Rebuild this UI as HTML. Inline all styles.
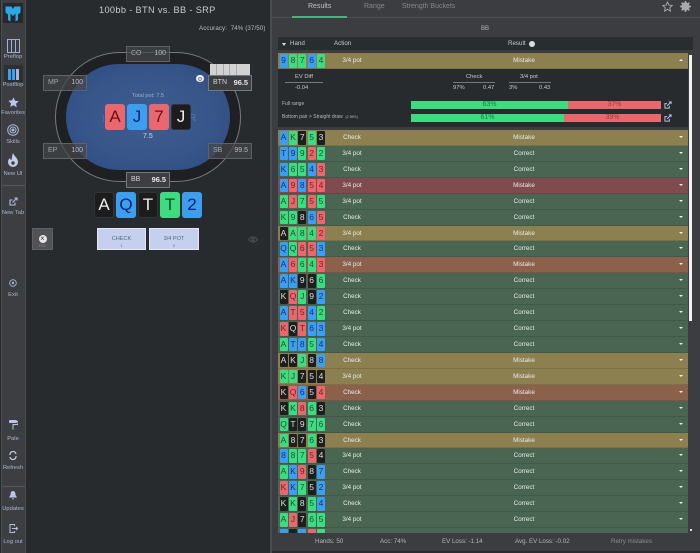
<!DOCTYPE html>
<html><head><meta charset="utf-8"><style>
html,body{margin:0;padding:0;background:#272b2e}
#p{position:relative;width:700px;height:553px;overflow:hidden;background:#272b2e;font-family:"Liberation Sans",sans-serif;color:#c9ccd2;filter:blur(.3px)}
.a{position:absolute}
#side{left:1px;top:0;width:25px;height:553px;background:#3c3e42;border-left:1px solid #4a4c50;border-right:1px solid #4a4c50;box-sizing:border-box}
.sl{position:absolute;left:0;width:26px;text-align:center;font-size:5.8px;color:#a9b4d2;line-height:7px;white-space:nowrap}
#right{left:270px;top:0;width:430px;height:553px;background:#3c3d40;border-left:2px solid #4b4c50;box-sizing:border-box}
.seat{position:absolute;width:44px;height:16px;background:rgba(70,72,75,.7);border:1px solid #5f6164;box-sizing:border-box;font-size:7px;line-height:14px;color:#a4a6a9}
.seat b{position:absolute;right:3px;font-weight:normal;font-size:7px;color:#b8babd}
.seat span{position:absolute;left:4px}
.seat.on{background:#3c3e41;border:1px solid #77797c}
.seat.on b{color:#e6e6e6;font-weight:bold;font-size:7.4px}.seat.on span{color:#d0d2d4}
.c{position:absolute;width:20px;height:26px;border-radius:3px;text-align:center;font-size:17px;line-height:26px}
.c.rr{background:#e8686e;color:#6b0f16}.c.bb{background:#3b9eee;color:#0d1f6e}.c.gg{background:#3ddc80;color:#0b4a27}.c.kk{background:#1c1c1c;color:#eee;border:1px solid #333;box-sizing:border-box;line-height:24px}
.btn{position:absolute;top:228px;height:22px;background:#c5d0ee;border:1px solid #e4e8f4;box-sizing:border-box;text-align:center;font-size:5.6px;color:#5c6480;line-height:7px;padding-top:6.5px}
#list{left:278px;top:130px;width:410px;height:403px;overflow:hidden}
.r{position:relative;height:15.93px;box-sizing:border-box;border-bottom:1px solid rgba(0,0,0,.12);font-size:6.3px;color:#e8eae8;line-height:15px}
.Y{background:#8c8050}.G{background:#4a6653}.R{background:#7f4b4f}.O{background:#8c614c}
.r i{position:absolute;top:1px;width:8px;height:13.5px;border-radius:1px;text-align:center;font:normal 8.5px/13.5px "Liberation Sans",sans-serif}
.r i:nth-child(1){left:1.5px}.r i:nth-child(2){left:11px}.r i:nth-child(3){left:20.3px}.r i:nth-child(4){left:29.6px}.r i:nth-child(5){left:39px}
i.b{background:#3b9eee;color:#14307e}i.g{background:#3ddc80;color:#12582f}i.e{background:#e8686e;color:#7a1c22}i.k{background:#1e1e1e;color:#ddd}
.r u{position:absolute;left:59px;width:30px;text-align:center;text-decoration:none;white-space:nowrap}
.r s{position:absolute;left:221px;width:50px;text-align:center;text-decoration:none}
.r em{position:absolute;left:401px;top:6px;width:0;height:0;border:2px solid transparent;border-top:2.5px solid #eee;border-bottom:0}
.t{position:absolute;white-space:nowrap}
</style></head><body><div id="p">

<div class="a" id="side"></div>
<div class="a" style="left:3px;top:3px;width:20px;height:20px;background:#26282b;border-radius:1px"></div>
<svg class="a" style="left:3px;top:3px" width="20" height="20" viewBox="0 0 20 20"><path d="M2.500 3.500H8.500L10 6 11.500 3.500H17.500V9.500L15 11.500V17L12.500 18.500V10.500L10 13 7.500 10.500V18.500L5 17V11.500L2.500 9.500Z" fill="#2ba8e8"/></svg>
<svg class="a" style="left:7px;top:39px" width="13" height="14" viewBox="0 0 13 14"><rect x=".5" y=".5" width="12" height="13" fill="none" stroke="#9fb0d6"/><path d="M4.500 1V13M8.500 1V13" stroke="#9fb0d6"/></svg>
<div class="sl" style="top:54px">Preflop</div>
<div class="a" style="left:4px;top:65px;width:19px;height:17px;background:#2d2f33"></div>
<svg class="a" style="left:8px;top:69px" width="11" height="12" viewBox="0 0 11 12"><rect width="3" height="11" fill="#3a9fee"/><rect x="4" width="3" height="11" fill="#3a9fee"/><rect x="8" width="3" height="11" fill="#a8b4d0"/></svg>
<div class="sl" style="top:82px">Postflop</div>
<svg class="a" style="left:8px;top:97px" width="11" height="11" viewBox="0 0 24 24"><path d="M12 1l3.400 7.300 7.900 1-5.800 5.500 1.500 7.900L12 18l-7 3.700 1.500-7.900L.7 8.300l7.900-1z" fill="#b9c6ea"/></svg>
<div class="sl" style="top:110px">Favorites</div>
<svg class="a" style="left:7px;top:124px" width="12" height="12" viewBox="0 0 12 12" fill="none" stroke="#a9b6d6"><circle cx="6" cy="6" r="5.300"/><circle cx="6" cy="6" r="3"/><circle cx="6" cy="6" r="1" fill="#a9b6d6"/></svg>
<div class="sl" style="top:139px">Skills</div>
<svg class="a" style="left:7px;top:153px" width="12" height="14" viewBox="0 0 12 14"><path d="M6 0C7 3 11 5 11 9A5 5 0 0 1 1 9C1 7 2 6 3 5 3 6.500 4 7 4.500 7 5 4.500 5 2 6 0Z" fill="#c2cdea"/><circle cx="6" cy="10" r="1.700" fill="#3a3c40"/></svg>
<div class="sl" style="top:171px">New UI</div>
<div class="a" style="left:2px;top:185px;width:23px;height:1px;background:#565860"></div>
<svg class="a" style="left:9px;top:197px" width="9" height="9" viewBox="0 0 9 9" fill="none" stroke="#b4c0de" stroke-width="1.100"><path d="M6 5.500V8H1V3H3.500M3.500 5.500L8 1M5.500 1H8V3.500"/></svg>
<div class="sl" style="top:210px">New Tab</div>
<svg class="a" style="left:9px;top:279px" width="8" height="8" viewBox="0 0 8 8"><circle cx="4" cy="4" r="3.300" fill="none" stroke="#a9b6d6" stroke-width=".9"/><circle cx="4" cy="4" r="1.200" fill="#a9b6d6"/></svg>
<div class="sl" style="top:292px">Exit</div>
<svg class="a" style="left:9px;top:420px" width="9" height="10" viewBox="0 0 9 10"><rect width="8" height="3" rx="1" fill="#b9c6ea"/><path d="M8 1.500H9V4.500H4V9.500" fill="none" stroke="#b9c6ea"/></svg>
<div class="sl" style="top:436px">Pale</div>
<svg class="a" style="left:9px;top:451px" width="8" height="9" viewBox="0 0 8 9" fill="none" stroke="#c2cdea" stroke-width="1.200"><path d="M1 4A3 3 0 0 1 7 3M7 5A3 3 0 0 1 1 6"/></svg>
<div class="sl" style="top:465px">Refresh</div>
<div class="a" style="left:2px;top:486px;width:23px;height:1px;background:#565860"></div>
<svg class="a" style="left:9px;top:491px" width="8" height="9" viewBox="0 0 8 9"><path d="M4 0C6 0 6.500 2 6.500 4L8 6.500H0L1.500 4C1.500 2 2 0 4 0ZM3 7.300H5L4 9Z" fill="#b9c6ea"/></svg>
<div class="sl" style="top:506px">Updates</div>
<svg class="a" style="left:9px;top:524px" width="9" height="9" viewBox="0 0 9 9" fill="none" stroke="#b4c0de"><path d="M5.500 2V.5H1V8.500H5.500V7M3 4.500H8.500M7 3L8.500 4.500 7 6"/></svg>
<div class="sl" style="top:539px">Log out</div>

<div class="t" style="left:99px;top:5px;font-size:9.200px;letter-spacing:.35px;color:#c8cace;line-height:11px">100bb - BTN vs. BB - SRP</div>
<div class="t" style="left:199px;top:25px;font-size:6.200px;letter-spacing:.1px;color:#b8bbc0;line-height:8px">Accuracy: &nbsp;74% (37/50)</div>

<div class="a" style="left:55px;top:52px;width:186px;height:130px;border-radius:65px;box-sizing:border-box;border:1px solid #77797c;background:#1f2023"></div>
<div class="a" style="left:66px;top:64px;width:164px;height:106px;border-radius:53px;background:radial-gradient(ellipse at center,#3f5c8e 0%,#38568a 55%,#2a4a80 100%)"></div>
<div class="t" style="left:102px;top:114px;font-size:10px;color:#2f78b8">I</div>
<div class="t" style="left:189px;top:113px;font-size:10px;color:#5a7aa8">R</div>
<div class="t" style="left:132px;top:93px;font-size:5.600px;color:#9bb0c8">Total pot: 7.5</div>
<div class="c rr" style="left:105px;top:104px">A</div>
<div class="c bb" style="left:127px;top:104px">J</div>
<div class="c rr" style="left:149px;top:104px">7</div>
<div class="c kk" style="left:171px;top:104px">J</div>
<div class="t" style="left:143px;top:133px;font-size:7px;color:#d4dae6">7.5</div>

<div class="seat" style="left:126px;top:46px"><span>CO</span><b>100</b></div>
<div class="seat" style="left:43px;top:75px"><span>MP</span><b>100</b></div>
<div class="seat" style="left:43px;top:143px"><span>EP</span><b>100</b></div>
<div class="seat" style="left:208px;top:143px"><span>SB</span><b>99.5</b></div>
<div class="a" style="left:210px;top:64px;width:40px;height:12px;background:#d2d2d2"></div>
<div class="a" style="left:216px;top:64px;width:1px;height:12px;background:#aaa"></div>
<div class="a" style="left:223px;top:64px;width:1px;height:12px;background:#aaa"></div>
<div class="a" style="left:229px;top:64px;width:1px;height:12px;background:#aaa"></div>
<div class="a" style="left:236px;top:64px;width:1px;height:12px;background:#aaa"></div>
<div class="seat on" style="left:208px;top:75px"><span>BTN</span><b>96.5</b></div>
<div class="seat on" style="left:126px;top:172px"><span>BB</span><b>96.5</b></div>
<div class="a" style="left:196px;top:75px;width:8px;height:7px;border-radius:4px;background:#eee"></div>
<div class="a" style="left:198px;top:76.500px;width:4px;height:4px;border-radius:2px;border:1px solid #888;box-sizing:border-box"></div>

<div class="c kk" style="left:94px;top:192px">A</div>
<div class="c bb" style="left:116px;top:192px">Q</div>
<div class="c kk" style="left:138px;top:192px">T</div>
<div class="c gg" style="left:160px;top:192px">T</div>
<div class="c bb" style="left:182px;top:192px">2</div>

<div class="a" style="left:32px;top:228px;width:21px;height:22px;background:#505255;border:1px solid #5e6063;box-sizing:border-box"></div>
<div class="a" style="left:38.500px;top:235px;width:8px;height:8px;border-radius:4px;background:#e6e6e6;color:#444;font-size:8px;line-height:7.500px;text-align:center">×</div>
<div class="t" style="left:39px;top:243.500px;font-size:3.500px;color:#888">ESC</div>
<div class="btn" style="left:97px;width:49px">CHECK<br><span style="font-size:4px;line-height:5px">1</span></div>
<div class="btn" style="left:149px;width:50px">3/4 POT<br><span style="font-size:4px;line-height:5px">2</span></div>
<svg class="a" style="left:248px;top:236px" width="10" height="7" viewBox="0 0 10 7" fill="none" stroke="#4f5256"><path d="M.5 3.500C3 0 7 0 9.500 3.500 7 7 3 7 .5 3.500Z"/><circle cx="5" cy="3.500" r="1.300"/></svg>

<div class="a" id="right"></div>
<div class="a" style="left:272px;top:17px;width:428px;height:1px;background:#4e4f53"></div>
<div class="a" style="left:292px;top:16px;width:55px;height:2px;background:#3db87a"></div>
<div class="t" style="left:308px;top:3px;font-size:7px;color:#bfc1c4;line-height:8px">Results</div>
<div class="t" style="left:364px;top:3px;font-size:7px;color:#85878b;line-height:8px">Range</div>
<div class="t" style="left:402px;top:3px;font-size:7px;color:#85878b;line-height:8px">Strength Buckets</div>
<svg class="a" style="left:662px;top:1px" width="11" height="11" viewBox="0 0 24 24"><path d="M12 2l3 6.800 7.400.8-5.500 5 1.500 7.300L12 18.200 5.600 22l1.500-7.300-5.500-5L9 8.800z" fill="none" stroke="#a8aaae" stroke-width="2"/></svg>
<svg class="a" style="left:680px;top:1px" width="11" height="11" viewBox="0 0 11 11"><circle cx="5.500" cy="5.500" r="3" fill="none" stroke="#a8aaae" stroke-width="2.200"/><path d="M5.500 0V11M0 5.500H11M1.600 1.600L9.400 9.400M9.400 1.600L1.600 9.400" stroke="#a8aaae" stroke-width="1.500"/></svg>
<div class="t" style="left:481px;top:25px;font-size:6px;color:#b4b6ba;line-height:8px">BB</div>

<div class="a" style="left:278px;top:37px;width:415px;height:13px;background:#2a2d30"></div>
<div class="a" style="left:281.500px;top:42.500px;width:0;height:0;border:2.500px solid transparent;border-top:3px solid #ddd;border-bottom:0"></div>
<div class="t" style="left:290px;top:40px;font-size:6.200px;color:#c8cacc;line-height:8px">Hand</div>
<div class="t" style="left:334px;top:40px;font-size:6.200px;color:#c8cacc;line-height:8px">Action</div>
<div class="t" style="left:508px;top:40px;font-size:6.200px;color:#c8cacc;line-height:8px">Result</div>
<div class="a" style="left:529px;top:41px;width:6px;height:6px;border-radius:3px;background:#ddd"></div>

<div class="a" style="left:278px;top:53px;width:410px;height:74px;background:#272b2e"></div>
<div class="r Y a" style="left:278px;top:53px;width:410px;height:16px"><i class="b">9</i><i class="g">8</i><i class="g">7</i><i class="b">6</i><i class="g">4</i><u>3/4 pot</u><s>Mistake</s><em style="border-top:0;border-bottom:2.500px solid #eee"></em></div>

<div class="t" style="left:295px;top:74px;font-size:5.800px;color:#c8cacc;line-height:7px">EV Diff</div>
<div class="a" style="left:285px;top:82px;width:38px;height:1px;background:#777"></div>
<div class="t" style="left:295px;top:85px;font-size:5.800px;color:#c8cacc;line-height:7px">-0.04</div>
<div class="t" style="left:466px;top:74px;font-size:5.800px;color:#c8cacc;line-height:7px">Check</div>
<div class="a" style="left:453px;top:82px;width:42px;height:1px;background:#777"></div>
<div class="t" style="left:453px;top:85px;font-size:5.800px;color:#c8cacc;line-height:7px">97%</div>
<div class="t" style="left:483px;top:85px;font-size:5.800px;color:#c8cacc;line-height:7px">0.47</div>
<div class="t" style="left:520px;top:74px;font-size:5.800px;color:#c8cacc;line-height:7px">3/4 pot</div>
<div class="a" style="left:509px;top:82px;width:42px;height:1px;background:#777"></div>
<div class="t" style="left:509px;top:85px;font-size:5.800px;color:#c8cacc;line-height:7px">3%</div>
<div class="t" style="left:539px;top:85px;font-size:5.800px;color:#c8cacc;line-height:7px">0.43</div>

<div class="t" style="left:282px;top:101px;font-size:5px;color:#b8babc;line-height:7px">Full range</div>
<div class="a" style="left:411px;top:101px;width:157px;height:8px;background:#3ddc80;font-size:7px;line-height:8px;text-align:center;color:#1f7a48">63%</div>
<div class="a" style="left:568px;top:101px;width:93px;height:8px;background:#e8686e;font-size:7px;line-height:8px;text-align:center;color:#9e3a40">37%</div>
<div class="t" style="left:282px;top:114px;font-size:5px;color:#b8babc;line-height:7px">Bottom pair &gt; Straight draw &nbsp;<span style="font-size:3.500px">(2.95%)</span></div>
<div class="a" style="left:411px;top:114px;width:153px;height:8px;background:#3ddc80;font-size:7px;line-height:8px;text-align:center;color:#1f7a48">61%</div>
<div class="a" style="left:564px;top:114px;width:97px;height:8px;background:#e8686e;font-size:7px;line-height:8px;text-align:center;color:#9e3a40">39%</div>
<svg class="a" style="left:664px;top:101px" width="8" height="8" viewBox="0 0 9 9" fill="none" stroke="#b4c0de" stroke-width="1.100"><path d="M6 5.500V8H1V3H3.500M3.500 5.500L8 1M5.500 1H8V3.500"/></svg>
<svg class="a" style="left:664px;top:114px" width="8" height="8" viewBox="0 0 9 9" fill="none" stroke="#b4c0de" stroke-width="1.100"><path d="M6 5.500V8H1V3H3.500M3.500 5.500L8 1M5.500 1H8V3.500"/></svg>

<div class="a" id="list">
<div class="r Y"><i class="b">A</i><i class="g">K</i><i class="k">7</i><i class="g">5</i><i class="k">3</i><u>Check</u><s>Mistake</s><em></em></div>
<div class="r G"><i class="b">T</i><i class="b">9</i><i class="g">9</i><i class="e">2</i><i class="g">2</i><u>3/4 pot</u><s>Correct</s><em></em></div>
<div class="r G"><i class="b">K</i><i class="g">6</i><i class="g">5</i><i class="b">4</i><i class="e">3</i><u>Check</u><s>Correct</s><em></em></div>
<div class="r R"><i class="b">A</i><i class="e">9</i><i class="b">8</i><i class="e">5</i><i class="e">4</i><u>3/4 pot</u><s>Mistake</s><em></em></div>
<div class="r G"><i class="g">A</i><i class="e">J</i><i class="g">7</i><i class="e">5</i><i class="g">5</i><u>3/4 pot</u><s>Correct</s><em></em></div>
<div class="r G"><i class="g">K</i><i class="g">9</i><i class="k">8</i><i class="b">6</i><i class="e">5</i><u>Check</u><s>Correct</s><em></em></div>
<div class="r Y"><i class="k">A</i><i class="g">A</i><i class="g">8</i><i class="g">4</i><i class="e">2</i><u>3/4 pot</u><s>Mistake</s><em></em></div>
<div class="r G"><i class="b">Q</i><i class="g">Q</i><i class="e">6</i><i class="e">5</i><i class="b">3</i><u>Check</u><s>Correct</s><em></em></div>
<div class="r O"><i class="b">A</i><i class="e">6</i><i class="g">6</i><i class="g">4</i><i class="e">3</i><u>3/4 pot</u><s>Mistake</s><em></em></div>
<div class="r G"><i class="b">A</i><i class="b">K</i><i class="k">9</i><i class="k">6</i><i class="g">6</i><u>Check</u><s>Correct</s><em></em></div>
<div class="r G"><i class="k">K</i><i class="e">Q</i><i class="g">J</i><i class="k">9</i><i class="b">2</i><u>Check</u><s>Correct</s><em></em></div>
<div class="r G"><i class="b">A</i><i class="e">T</i><i class="e">5</i><i class="b">4</i><i class="g">2</i><u>Check</u><s>Correct</s><em></em></div>
<div class="r G"><i class="e">K</i><i class="k">Q</i><i class="e">T</i><i class="b">6</i><i class="b">3</i><u>3/4 pot</u><s>Correct</s><em></em></div>
<div class="r G"><i class="g">A</i><i class="b">T</i><i class="b">8</i><i class="g">5</i><i class="b">4</i><u>Check</u><s>Correct</s><em></em></div>
<div class="r Y"><i class="k">A</i><i class="k">K</i><i class="g">J</i><i class="k">8</i><i class="b">8</i><u>Check</u><s>Mistake</s><em></em></div>
<div class="r Y"><i class="g">K</i><i class="g">J</i><i class="k">7</i><i class="k">5</i><i class="k">4</i><u>3/4 pot</u><s>Mistake</s><em></em></div>
<div class="r O"><i class="k">K</i><i class="e">Q</i><i class="b">6</i><i class="k">5</i><i class="e">4</i><u>Check</u><s>Mistake</s><em></em></div>
<div class="r G"><i class="k">K</i><i class="g">K</i><i class="e">8</i><i class="g">6</i><i class="k">3</i><u>Check</u><s>Correct</s><em></em></div>
<div class="r G"><i class="g">Q</i><i class="k">T</i><i class="k">9</i><i class="g">7</i><i class="g">6</i><u>Check</u><s>Correct</s><em></em></div>
<div class="r Y"><i class="g">A</i><i class="k">8</i><i class="k">7</i><i class="g">6</i><i class="k">3</i><u>Check</u><s>Mistake</s><em></em></div>
<div class="r G"><i class="b">8</i><i class="g">8</i><i class="g">7</i><i class="e">5</i><i class="k">4</i><u>3/4 pot</u><s>Correct</s><em></em></div>
<div class="r G"><i class="g">A</i><i class="b">K</i><i class="e">9</i><i class="k">8</i><i class="b">7</i><u>Check</u><s>Correct</s><em></em></div>
<div class="r G"><i class="e">K</i><i class="b">K</i><i class="g">7</i><i class="k">5</i><i class="b">2</i><u>3/4 pot</u><s>Correct</s><em></em></div>
<div class="r G"><i class="k">K</i><i class="g">K</i><i class="k">8</i><i class="g">5</i><i class="b">4</i><u>Check</u><s>Correct</s><em></em></div>
<div class="r G"><i class="g">A</i><i class="e">J</i><i class="k">7</i><i class="g">6</i><i class="g">5</i><u>3/4 pot</u><s>Correct</s><em></em></div>
<div class="r G"><i class="b"></i><i class="k"></i><i class="b"></i><i class="e"></i><i class="g"></i></div>
</div>

<div class="a" style="left:689px;top:55px;width:3px;height:266px;background:#f2f2f2"></div>
<div class="a" style="left:690px;top:529px;width:2px;height:2px;background:#ddd"></div>

<div class="t" style="left:315px;top:538px;font-size:6.200px;color:#b4b6ba;line-height:8px">Hands: 50</div>
<div class="t" style="left:380px;top:538px;font-size:6.200px;color:#b4b6ba;line-height:8px">Acc: 74%</div>
<div class="t" style="left:442px;top:538px;font-size:6.200px;color:#b4b6ba;line-height:8px">EV Loss: -1.14</div>
<div class="t" style="left:515px;top:538px;font-size:6.200px;color:#b4b6ba;line-height:8px">Avg. EV Loss: -0.02</div>
<div class="t" style="left:611px;top:538px;font-size:6.200px;color:#8a8c90;line-height:8px">Retry mistakes</div>
<div class="a" style="left:272px;top:551px;width:428px;height:2px;background:#2a2c2f"></div>

</div></body></html>
